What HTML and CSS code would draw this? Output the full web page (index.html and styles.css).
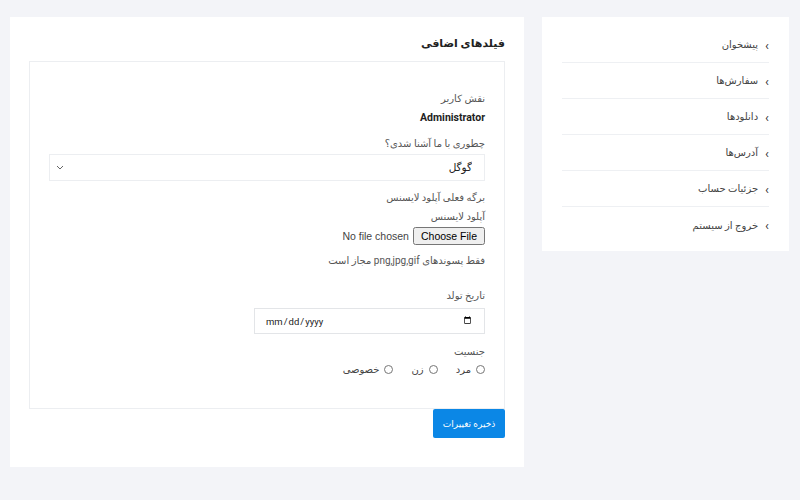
FILE: index.html
```html
<!DOCTYPE html>
<html lang="fa" dir="rtl">
<head>
    <meta charset="UTF-8">
    <title>حساب کاربری</title>
    <link rel="stylesheet" href="styles.css">
</head>
<body>
    <div class="page">
        <aside class="sidebar">
            <ul class="menu">
                <li><span class="chev">›</span>پیشخوان</li>
                <li><span class="chev">›</span>سفارش‌ها</li>
                <li><span class="chev">›</span>دانلودها</li>
                <li><span class="chev">›</span>آدرس‌ها</li>
                <li><span class="chev">›</span>جزئیات حساب</li>
                <li><span class="chev">›</span>خروج از سیستم</li>
            </ul>
        </aside>

        <main class="main">
            <h3 class="title">فیلدهای اضافی</h3>
            <form class="fields">
                <p class="label">نقش کاربر</p>
                <p class="value">Administrator</p>

                <p class="label tight">چطوری با ما آشنا شدی؟</p>
                <select class="select">
                    <option>گوگل</option>
                </select>

                <p class="label">برگه فعلی آپلود لایسنس</p>
                <p class="label tight">آپلود لایسنس</p>
                <input type="file" class="file">
                <p class="label hint">فقط پسوندهای png,jpg,gif مجاز است</p>

                <p class="label birth">تاریخ تولد</p>
                <input type="date" class="date" dir="ltr">

                <p class="label gender">جنسیت</p>
                <div class="radios">
                    <label><input type="radio" name="g"> مرد</label>
                    <label><input type="radio" name="g"> زن</label>
                    <label><input type="radio" name="g"> خصوصی</label>
                </div>
            </form>
            <button class="save" type="button">ذخیره تغییرات</button>
        </main>
    </div>
</body>
</html>
```

FILE: styles.css
```css
* {
    margin: 0;
    padding: 0;
    box-sizing: border-box;
}
body {
    background: #f3f4f8;
    font-family: Roboto, "DejaVu Sans", sans-serif;
    font-size: 10px;
    color: #555;
}
.page {
    display: flex;
    align-items: flex-start;
    gap: 18px;
    padding: 17px 11px 0 10px;
}
.sidebar {
    width: 247px;
    background: #fff;
    padding: 10px 20px 8px 20px;
}
.menu {
    list-style: none;
}
.menu li {
    height: 36px;
    display: flex;
    align-items: center;
    gap: 7px;
    color: #444;
    border-bottom: 1px solid #eef0f3;
}
.menu li:last-child {
    border-bottom: none;
}
.chev {
    font-size: 13px;
    color: #333;
    padding-top: 1px;
}
.main {
    flex: 1;
    background: #fff;
    padding: 20px 19px 29px 19px;
    display: flex;
    flex-direction: column;
    align-items: flex-start;
}
.title {
    font-size: 11px;
    font-weight: bold;
    color: #222;
    margin-bottom: 10px;
    line-height: 14px;
}
.fields {
    align-self: stretch;
    border: 1px solid #eceef1;
    padding: 30px 19px 31px 19px;
    display: flex;
    flex-direction: column;
    align-items: flex-start;
}
.label {
    line-height: 14px;
    margin-bottom: 5px;
}
.label.tight {
    margin-bottom: 3px;
}
.label.gender {
    margin-bottom: 2px;
}
.value {
    font-size: 10.5px;
    font-weight: bold;
    color: #222;
    line-height: 14px;
    margin: 0 0 12px 0;
}
.select {
    appearance: none;
    width: 100%;
    height: 27px;
    border: 1px solid #eceef1;
    background: #fff url("data:image/svg+xml,%3Csvg xmlns='http://www.w3.org/2000/svg' width='8' height='5' viewBox='0 0 8 5'%3E%3Cpath d='M1 1l3 3 3-3' fill='none' stroke='%23666' stroke-width='1'/%3E%3C/svg%3E") no-repeat left 6px center;
    font-family: inherit;
    font-size: 10.5px;
    color: #222;
    padding: 0 12px;
    margin-bottom: 10px;
}
.file {
    font-family: "Liberation Sans", sans-serif;
    font-size: 10.5px;
    color: #444;
    margin-bottom: 9px;
}
.hint {
    margin-bottom: 21px;
}
.date {
    width: 231px;
    height: 26px;
    border: 1px solid #e3e5e8;
    font-family: inherit;
    font-size: 9.5px;
    color: #222;
    padding: 0 10px;
    margin-bottom: 11px;
}
.radios {
    display: flex;
    gap: 18px;
    color: #444;
    height: 16px;
}
.radios label {
    display: flex;
    align-items: center;
    gap: 5px;
    height: 16px;
}
.radios input {
    margin: 0;
    width: 9px;
    height: 9px;
}
.save {
    align-self: flex-start;
    width: 72px;
    height: 29px;
    border: none;
    background: #0b87e6;
    color: #fff;
    font-family: inherit;
    font-size: 9px;
    border-radius: 2px;
}
```
